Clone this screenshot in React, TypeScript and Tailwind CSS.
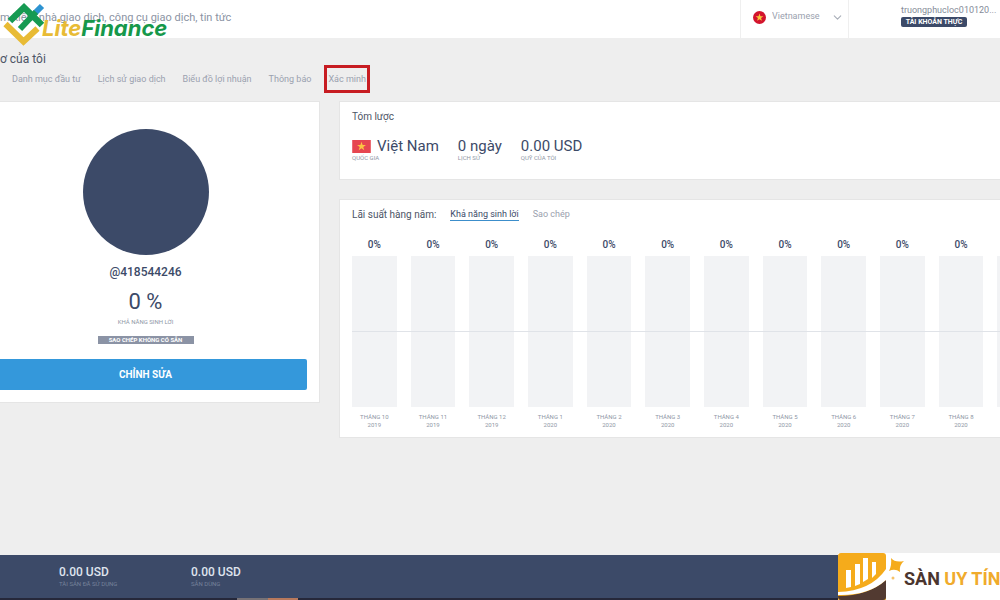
import { ChevronDown } from "lucide-react";

const tabs = ["Danh mục đầu tư", "Lịch sử giao dịch", "Biểu đồ lợi nhuận", "Thông báo"];

const months = [
  { month: "THÁNG 10", year: "2019" },
  { month: "THÁNG 11", year: "2019" },
  { month: "THÁNG 12", year: "2019" },
  { month: "THÁNG 1", year: "2020" },
  { month: "THÁNG 2", year: "2020" },
  { month: "THÁNG 3", year: "2020" },
  { month: "THÁNG 4", year: "2020" },
  { month: "THÁNG 5", year: "2020" },
  { month: "THÁNG 6", year: "2020" },
  { month: "THÁNG 7", year: "2020" },
  { month: "THÁNG 8", year: "2020" },
];

const STAR = "M0 -5 L1.2 -1.6 L4.8 -1.6 L1.9 0.6 L3 4 L0 2 L-3 4 L-1.9 0.6 L-4.8 -1.6 L-1.2 -1.6 Z";

function LiteFinanceLogo() {
  return (
    <div className="absolute left-0 top-0 flex items-center pointer-events-none">
      <svg width="46" height="48" viewBox="0 0 46 48" fill="none" className="shrink-0">
        <path d="M5.5 24 L23.5 41.5 L37.5 28.5" stroke="#e8bb35" strokeWidth="6" />
        <path d="M42 6 L35 13" stroke="#2d93d1" strokeWidth="6" />
        <path d="M36 12 L20 29" stroke="#169a52" strokeWidth="6" />
        <path d="M10 21 L24 7.5 L42 25" stroke="#169a52" strokeWidth="6.5" />
      </svg>
      <span className="-ml-1 mt-2 font-[Inter,sans-serif] text-[22px] leading-7 font-bold italic text-[#16984a]">
        <span className="text-[#e8bb35]">Lite</span>Finance
      </span>
    </div>
  );
}

function SanUyTinBadge() {
  return (
    <div className="absolute right-0 bottom-0 flex h-[47px] w-[162px] items-center overflow-hidden bg-white">
      <svg width="66" height="47" viewBox="0 0 66 47" className="shrink-0">
        <rect width="48" height="48" rx="3" fill="#f5ab1b" />
        <path d="M0 43 Q30 43 48 27 V44 Q48 47 45 47 H3 Q0 47 0 43 Z" fill="#523a31" />
        <path d="M0 39 Q33 38 48 16 V27 Q30 43 0 42 Z" fill="#fff" />
        <g fill="#fff">
          <path d="M8 17 h5 v17 l-5 1 z" />
          <path d="M17 11 h5 v20 l-5 2 z" />
          <path d="M25 5 h5 v21 l-5 3 z" />
          <path d="M34 9 h4 v12 l-4 4 z" />
        </g>
        <path d="M53 5 Q57 10 66 8 Q61 12 62 19 Q57 15 51 18 Q54 12 53 5 Z" fill="#f5ab1b" />
        <circle cx="55" cy="25" r="1.5" fill="#f6c269" />
      </svg>
      <span className="mt-1 whitespace-nowrap text-[18px] font-bold text-[#4b352e]">
        SÀN <span className="text-[#f0ab2c]">UY TÍN</span>
      </span>
    </div>
  );
}

function Header() {
  return (
    <header className="flex h-[38px] bg-white">
      <input
        type="search"
        aria-label="Tìm kiếm"
        placeholder="m kiếm nhà giao dịch, công cụ giao dịch, tin tức"
        className="h-[34px] min-w-0 flex-1 text-[11px] text-[#8b93a3] outline-none placeholder:text-[#8b93a3]"
      />
      <div className="relative flex w-[109px] shrink-0 items-start border-x border-[#efefef]">
        <svg width="13" height="13" viewBox="-8 -8 16 16" className="absolute left-3 top-[11px]">
          <circle r="8" fill="#d3142d" />
          <path d={STAR} fill="#f7c93b" />
        </svg>
        <select
          aria-label="Vietnamese"
          className="h-[34px] w-full appearance-none bg-transparent pl-[31px] text-[9px] text-[#9aa1ae]"
        >
          <option>Vietnamese</option>
        </select>
        <ChevronDown size={13} strokeWidth={2} className="pointer-events-none absolute right-1 top-[11px] text-[#a9aeb8]" />
      </div>
      <div className="w-[151px] shrink-0 whitespace-nowrap pl-[52px] pt-1">
        <p className="text-[9px] leading-3 text-[#858c99]">truongphucloc010120...</p>
        <p className="mt-px flex h-[10px] w-[66px] items-center justify-center rounded-xs bg-[#3c4a68] text-[7px] font-bold text-white">
          TÀI KHOẢN THỰC
        </p>
      </div>
    </header>
  );
}

function ProfileCard() {
  return (
    <section className="-ml-[29px] flex w-[349px] shrink-0 flex-col items-center self-start border border-[#e5e5e5] bg-white px-3 pt-[27px] pb-3">
      <div className="size-[126px] rounded-full bg-[#3c4a68]" />
      <h2 className="mt-[7px] text-xs leading-5 font-medium text-[#3c4a68]">@418544246</h2>
      <p className="mt-2 text-[22px] leading-6 text-[#3c4a68]">0 %</p>
      <p className="mt-1 text-[6px] leading-2 text-[#8f97a6]">KHẢ NĂNG SINH LỜI</p>
      <p className="mt-[10px] flex h-2 w-24 items-center justify-center bg-[#8b93a5] text-[6px] leading-2 font-bold text-white">
        SAO CHÉP KHÔNG CÓ SẴN
      </p>
      <button className="mt-[15px] h-[31px] w-full rounded-xs bg-[#3498db] text-[10px] font-bold text-white">
        CHỈNH SỬA
      </button>
    </section>
  );
}

function SummaryCard() {
  return (
    <section className="h-[79px] border border-r-0 border-[#e5e5e5] bg-white px-3 pt-2 text-[#3c4a68]">
      <h2 className="text-[10px] leading-[14px] text-[#4d5566]">Tóm lược</h2>
      <div className="mt-3 flex gap-[19px] text-[15px] leading-5">
        <div>
          <p className="flex items-center gap-[6px]">
            <svg width="19" height="13" viewBox="-10 -7 20 14">
              <rect x="-10" y="-7" width="20" height="14" fill="#e64650" />
              <path d={STAR} fill="#fbc443" />
            </svg>
            Việt Nam
          </p>
          <p className="text-[6px] leading-1 text-[#8f97a6]">QUỐC GIA</p>
        </div>
        <div>
          <p>0 ngày</p>
          <p className="text-[6px] leading-1 text-[#8f97a6]">LỊCH SỬ</p>
        </div>
        <div>
          <p>0.00 USD</p>
          <p className="text-[6px] leading-1 text-[#8f97a6]">QUỸ CỦA TÔI</p>
        </div>
      </div>
    </section>
  );
}

function YearlyCard() {
  return (
    <section className="mt-[19px] overflow-hidden border border-r-0 border-[#e5e5e5] bg-white pt-2 pb-2 pl-3">
      <div className="flex items-start gap-[14px] text-[9px] leading-3">
        <h2 className="text-[10px] leading-[14px] text-[#4d5566]">Lãi suất hàng năm:</h2>
        <button className="border-b border-[#3c8ecb] text-[#3c4a68]">Khả năng sinh lời</button>
        <button className="text-[#9aa1ae]">Sao chép</button>
      </div>
      <div className="relative mt-[17px] -mr-[42px] grid grid-cols-12 gap-x-[14px]">
        {months.map((m) => (
          <div key={m.month} className="text-center">
            <p className="text-[10px] leading-3 font-medium text-[#3c4a68]">0%</p>
            <div className="mt-[5px] h-[151px] bg-[#f2f3f5]" />
            <p className="mt-[6px] text-[6px] leading-2 whitespace-nowrap text-[#8f97a6]">
              {m.month}
              <br />
              {m.year}
            </p>
          </div>
        ))}
        <div className="mt-[17px] h-[151px] bg-[#f2f3f5]" />
        <div className="absolute inset-x-0 top-[92px] h-px bg-[#e0e3e8]" />
      </div>
    </section>
  );
}

export default function App() {
  return (
    <div className="relative flex min-h-screen flex-col overflow-hidden bg-[#eeeeee] font-[Roboto,'Noto_Sans',sans-serif]">
      <Header />
      <LiteFinanceLogo />

      <h1 className="mt-3 text-xs leading-[18px] text-[#4d5566]">ơ của tôi</h1>
      <nav className="mt-1 flex gap-[17px] pl-3 text-[9px] leading-[14px] text-[#9aa1ae]">
        {tabs.map((tab) => (
          <a key={tab} href="#">
            {tab}
          </a>
        ))}
        <a href="#" className="relative">
          Xác minh
          <span className="absolute -inset-x-1 -inset-y-[7px] border-3 border-[#c71c22]" />
        </a>
      </nav>

      <main className="mt-[15px] flex gap-[19px]">
        <ProfileCard />
        <div className="min-w-0 flex-1">
          <SummaryCard />
          <YearlyCard />
        </div>
      </main>

      <footer className="mt-auto">
        <div className="flex h-[43px] gap-[71px] bg-[#3c4a68] pt-[10px] pl-[59px]">
          <div className="min-w-[61px]">
            <p className="text-xs leading-[14px] font-medium text-[#dfe4ee]">0.00 USD</p>
            <p className="text-[6px] leading-[10px] text-[#76829b]">TÀI SẢN ĐÃ SỬ DỤNG</p>
          </div>
          <div>
            <p className="text-xs leading-[14px] font-medium text-[#dfe4ee]">0.00 USD</p>
            <p className="text-[6px] leading-[10px] text-[#76829b]">SẴN DÙNG</p>
          </div>
        </div>
        <div className="flex h-[2px] bg-[#26283a] pl-[237px]">
          <span className="w-[31px] bg-[#777276]" />
          <span className="w-[30px] bg-[#b8795c]" />
        </div>
      </footer>
      <SanUyTinBadge />
    </div>
  );
}
